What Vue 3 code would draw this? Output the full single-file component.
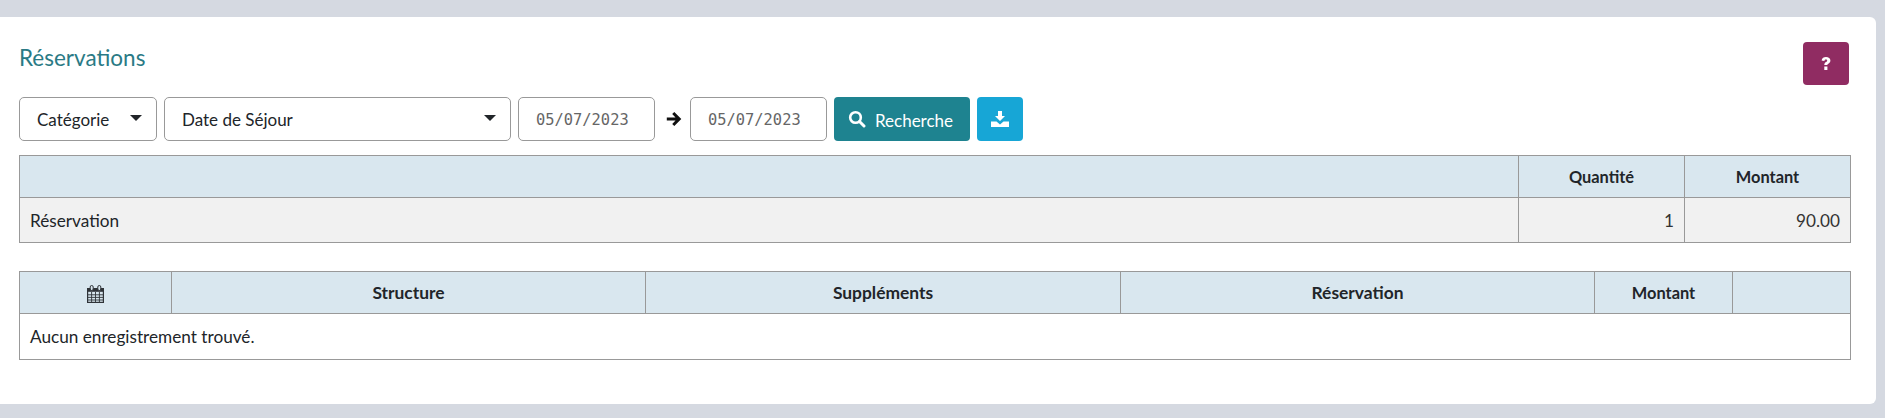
<script setup>
const detailHead = [
  { label: 'Structure', col: 'c-a' },
  { label: 'Suppléments', col: 'c-b' },
  { label: 'Réservation', col: 'c-a' }
]
</script>

<template>
  <div class="page">
    <section class="card">
      <header class="card__head">
        <h2 class="card__title">Réservations</h2>
        <button class="btn btn--help" type="button">
          <svg class="icon-help" viewBox="0 0 10 15"><path d="M.6 4.500C.9 2 2.700 1 5 1c2.500 0 4.400 1.400 4.400 3.600 0 1.800-1.100 2.600-2.100 3.200-.7.400-.9.700-.9 1.300H3.300c0-1.600.6-2.400 1.700-3 .8-.5 1.200-.8 1.200-1.400 0-.7-.5-1.100-1.300-1.100-.9 0-1.300.5-1.500 1.300L.6 4.500zM3.300 10.500h3.100V14H3.300z" fill="#fff"/></svg>
        </button>
      </header>

      <div class="toolbar">
        <div class="select select--cat">
          <span>Catégorie</span>
          <i class="caret"></i>
        </div>
        <div class="select select--date">
          <span>Date de Séjour</span>
          <i class="caret"></i>
        </div>
        <input class="date" value="05/07/2023" />
        <svg class="arrow" viewBox="0 0 16 16"><path d="M8.300 1l7 7-7 7-2.100-2.100 3.300-3.300H.8V6.400h8.700L6.200 3.100z" fill="#111"/></svg>
        <input class="date" value="05/07/2023" />
        <button class="btn btn--search" type="button">
          <svg class="icon-search" viewBox="0 0 18 18"><circle cx="7.500" cy="7.500" r="5.300" fill="none" stroke="#fff" stroke-width="2.600"/><path d="M11.500 11.500L16 16" stroke="#fff" stroke-width="3" stroke-linecap="round"/></svg>
          <span>Recherche</span>
        </button>
        <button class="btn btn--export" type="button">
          <svg class="icon-dl" viewBox="0 0 18 16"><path d="M7 0h4v5h3l-5 5-5-5h3z" fill="#fff"/><path d="M0 10.500h5.500L9 13.500l3.500-3H18V16H0z" fill="#fff"/></svg>
        </button>
      </div>

      <table class="grid grid--summary">
        <colgroup>
          <col />
          <col class="c-qty" />
          <col class="c-qty" />
        </colgroup>
        <thead>
          <tr>
            <th></th>
            <th class="short">Quantité</th>
            <th class="short">Montant</th>
          </tr>
        </thead>
        <tbody>
          <tr class="row-grey">
            <td>Réservation</td>
            <td class="num">1</td>
            <td class="num">90.00</td>
          </tr>
        </tbody>
      </table>

      <table class="grid grid--detail">
        <colgroup>
          <col class="c-date" />
          <col v-for="h in detailHead" :key="h.label" :class="h.col" />
          <col class="c-mnt2" />
          <col />
        </colgroup>
        <thead>
          <tr>
            <th>
              <svg class="icon-cal" viewBox="0 0 17 18">
                <path d="M0 3h17v15H0z" fill="#2f3338"/>
                <path d="M1.200 6.800h14.600v10H1.200z" fill="#d9e7ef"/>
                <path d="M1 9.800h15M1 12.400h15M1 15h15M4.600 7v10M8.500 7v10M12.400 7v10" stroke="#2f3338" stroke-width="0.900" fill="none"/>
                <rect x="3.200" y="0.500" width="3" height="5" rx="1.500" fill="#d9e7ef" stroke="#2f3338"/>
                <rect x="10.800" y="0.500" width="3" height="5" rx="1.500" fill="#d9e7ef" stroke="#2f3338"/>
              </svg>
            </th>
            <th v-for="h in detailHead" :key="h.label">{{ h.label }}</th>
            <th class="short">Montant</th>
            <th></th>
          </tr>
        </thead>
        <tbody>
          <tr><td colspan="6">Aucun enregistrement trouvé.</td></tr>
        </tbody>
      </table>
    </section>
  </div>
</template>

<style>
html, body {
  margin: 0;
  background: #d5d9e1;
}
</style>

<style scoped>
.page {
  padding: 17px 9px 14px 0;
  font-family: "Lato", "Noto Sans", sans-serif;
  font-size: 17px;
  color: #212529;
}

.card {
  background: #fff;
  border-radius: 0 6px 6px 0;
  padding: 25px 25px 45px 19px;
  height: 387px;
  box-sizing: border-box;
}

.card__head {
  display: flex;
  justify-content: space-between;
  height: 55px;
}

.card__title {
  margin: 0;
  font-size: 22.500px;
  font-weight: 400;
  line-height: 32px;
  color: #2a7a85;
}

.btn {
  border: 0;
  border-radius: 4px;
  color: #fff;
  font: inherit;
  padding: 0;
  display: inline-flex;
  align-items: center;
  justify-content: center;
}

.btn--help {
  width: 46px;
  height: 43px;
  background: #902c62;
  margin-right: 2px;
}

.icon-help {
  width: 10px;
  height: 15px;
}

.toolbar {
  display: flex;
  align-items: center;
  gap: 7px;
  height: 44px;
  margin-bottom: 14px;
}

.select {
  height: 44px;
  box-sizing: border-box;
  border: 1px solid #999;
  border-radius: 5px;
  background: #fff;
  display: flex;
  align-items: center;
  justify-content: space-between;
  padding: 0 14px 0 17px;
}

.select--cat {
  width: 138px;
}

.select--date {
  width: 347px;
}

.caret {
  width: 0;
  height: 0;
  border-left: 6px solid transparent;
  border-right: 6px solid transparent;
  border-top: 6px solid #212529;
  margin-top: -3px;
}

.date {
  width: 137px;
  height: 44px;
  box-sizing: border-box;
  border: 1px solid #999;
  border-radius: 5px;
  padding: 2px 17px 0;
  font-family: "DejaVu Sans Mono", monospace;
  font-size: 15.400px;
  color: #666;
  outline: none;
}

.arrow {
  width: 16px;
  height: 16px;
  margin: 0 1px 0 4px;
}

.btn--search {
  width: 136px;
  height: 44px;
  background: #1e8390;
  gap: 9px;
  padding-right: 3px;
  box-sizing: border-box;
}

.btn--search span {
  padding-top: 2px;
}

.icon-search {
  width: 18px;
  height: 18px;
}

.btn--export {
  width: 46px;
  height: 44px;
  background: #17a6d6;
}

.icon-dl {
  width: 18px;
  height: 16px;
}

.grid {
  width: 1832px;
  border-collapse: collapse;
  table-layout: fixed;
}

.grid th,
.grid td {
  border: 1px solid #999;
  padding: 0 10px;
  font-weight: 400;
}

.grid th {
  background: #d9e7ef;
  font-size: 17.400px;
  font-weight: 700;
  text-align: center;
  height: 41px;
}

.grid th.short {
  font-size: 16.400px;
}

.grid td {
  font-size: 17.200px;
  height: 44px;
}

.grid--detail td {
  height: 45px;
}

.grid--summary {
  margin-bottom: 28px;
}

.row-grey td {
  background: #f1f1f1;
}

.grid td.num {
  text-align: right;
  color: #333;
}

.c-qty {
  width: 166px;
}

.c-date {
  width: 152px;
}

.c-a {
  width: 474px;
}

.c-b {
  width: 475px;
}

.c-mnt2 {
  width: 138px;
}

.icon-cal {
  width: 17px;
  height: 18px;
  vertical-align: middle;
}
</style>
